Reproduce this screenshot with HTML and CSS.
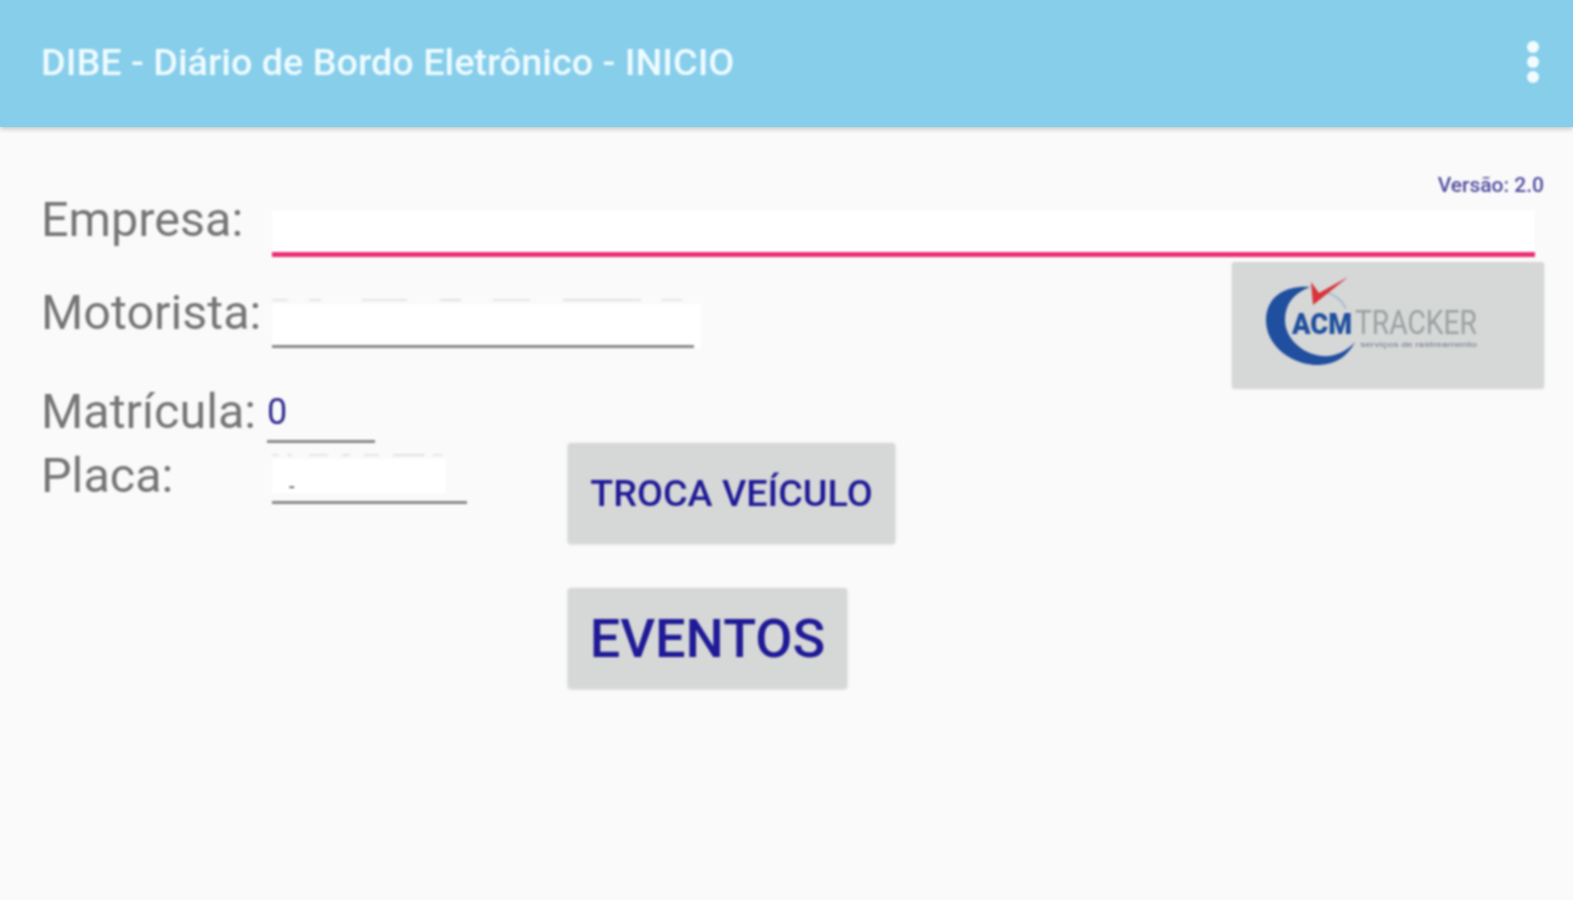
FILE: index.html
```html
<!DOCTYPE html>
<html lang="pt-BR">
<head>
<meta charset="utf-8">
<title>DIBE - Diário de Bordo Eletrônico - INICIO</title>
<link rel="stylesheet" href="styles.css">
</head>
<body>
<div class="screen">
  <header class="appbar">
    <h1 class="title">DIBE - Diário de Bordo Eletrônico - INICIO</h1>
    <div class="menu"><span class="dot"></span><span class="dot"></span><span class="dot"></span></div>
  </header>
  <main class="content">
    <div class="version">Versão: 2.0</div>
    <div class="row row-empresa">
      <div class="label">Empresa:</div>
      <div class="field field-focus"></div>
    </div>
    <div class="upper">
      <div class="upper-left">
        <div class="row row-motorista">
          <div class="label">Motorista:</div>
          <div class="field-wrap motorista">
            <div class="smudge"></div>
            <div class="field field-motorista"></div>
          </div>
        </div>
        <div class="row row-matricula">
          <div class="label">Matrícula:</div>
          <div class="field-matricula">0</div>
        </div>
      </div>
      <div class="logo">
        <svg width="312" height="126" viewBox="0 0 312 126">
          <path d="M78 25 C52 23 34 36 34 58 C34 84 60 104 88 103 C104 102 116 94 123 80 C114 90 102 95 90 94 C70 92 53 76 53 58 C53 42 62 31 78 25 Z" fill="#1f4f9e"/>
          <path d="M92 30 C102 32 110 38 114 47" fill="none" stroke="#9dbad0" stroke-width="1.5"/>
          <path d="M79 20 L81 43 L116 15 L87 31 Z" fill="#d8333a"/>
          <text class="logo-acm" x="60" y="72" textLength="60" lengthAdjust="spacingAndGlyphs">ACM</text>
          <text class="logo-tracker" x="123" y="72" textLength="122" lengthAdjust="spacingAndGlyphs">TRACKER</text>
          <text class="logo-sub" x="128" y="85" textLength="117" lengthAdjust="spacingAndGlyphs">serviços de rastreamento</text>
        </svg>
      </div>
    </div>
    <div class="lower">
      <div class="label label-placa">Placa:</div>
      <div class="field-wrap placa">
        <div class="smudge"></div>
        <div class="field field-placa"><span class="mark">-</span></div>
      </div>
      <div class="buttons">
        <button class="btn btn-small">TROCA VEÍCULO</button>
        <button class="btn btn-large">EVENTOS</button>
      </div>
    </div>
  </main>
</div>
</body>
</html>
```
FILE: styles.css
```css
html, body {
  margin: 0;
  padding: 0;
  height: 100%;
  overflow: hidden;
  background: #fafafa;
}
.screen {
  width: 1573px;
  height: 900px;
  background: #fafafa;
  font-family: Roboto, "Liberation Sans", sans-serif;
  display: flex;
  flex-direction: column;
}
.appbar {
  height: 127px;
  box-sizing: border-box;
  flex: none;
  background: #87ceeb;
  box-shadow: 0 2px 5px rgba(0, 0, 0, 0.22);
  display: flex;
  align-items: center;
  justify-content: space-between;
  padding: 0 34px 4px 41px;
}
.title {
  margin: 0;
  font-size: 37.8px;
  font-weight: 500;
  color: #eefbff;
  white-space: nowrap;
  filter: blur(1px);
}
.menu {
  display: flex;
  flex-direction: column;
  gap: 3px;
  filter: blur(1px);
}
.dot {
  width: 12px;
  height: 12px;
  border-radius: 50%;
  background: #f2fcff;
}
.content {
  padding: 46px 29px 0 41px;
  filter: blur(1px);
}
.version {
  text-align: right;
  font-size: 21px;
  font-weight: 500;
  line-height: 24px;
  color: #4f4a9e;
}
.row {
  display: flex;
}
.label {
  width: 231px;
  flex: none;
  font-size: 48.5px;
  line-height: 54px;
  color: #757575;
  white-space: nowrap;
}
.row-empresa {
  margin-top: 3px;
  height: 56px;
}
.row-empresa .label {
  margin-top: -7px;
}
.field {
  background: #fff;
  box-sizing: border-box;
  border-bottom: 3px solid #8a8a8a;
}
.field-focus {
  flex: 1;
  margin: 10px 9px 0 0;
  height: 47px;
  border-bottom: 5px solid #ec2f74;
}
.upper {
  display: flex;
  justify-content: space-between;
  margin-top: 5px;
  height: 182px;
}
.upper-left {
  display: flex;
  flex-direction: column;
}
.row-motorista {
  height: 87px;
}
.row-motorista .label {
  margin-top: 25px;
}
.field-wrap {
  display: flex;
  flex-direction: column;
}
.motorista {
  margin-top: 38px;
}
.smudge {
  height: 2px;
  margin-bottom: 3px;
  background: linear-gradient(90deg, #e8e8e8 0 4%, transparent 4% 9%, #e4e4e4 9% 12%, transparent 12% 22%, #e6e6e6 22% 33%, transparent 33% 41%, #e2e2e2 41% 46%, transparent 46% 54%, #e6e6e6 54% 63%, transparent 63% 71%, #e2e2e2 71% 90%, transparent 90% 95%, #e8e8e8 95% 100%);
}
.motorista .smudge {
  width: 410px;
}
.field-motorista {
  width: 429px;
  height: 44px;
  border-bottom: none;
  background: linear-gradient(#8a8a8a, #8a8a8a) left bottom / 422px 3px no-repeat, #fff;
}
.row-matricula {
  height: 95px;
}
.row-matricula .label {
  margin-top: 37px;
}
.field-matricula {
  margin: 33px 0 0 -5px;
  padding-top: 9px;
  width: 108px;
  height: 62px;
  box-sizing: border-box;
  border-bottom: 3px solid #8a8a8a;
  font-size: 36px;
  line-height: 44px;
  color: #2f2a8e;
}
.logo {
  width: 312px;
  height: 126px;
  margin-top: 1px;
  background: #d6d7d7;
  border-radius: 2px;
  box-shadow: 0 1px 2px rgba(0, 0, 0, 0.15);
}
.logo svg {
  display: block;
}
.logo-acm {
  font-size: 29px;
  font-weight: 900;
  fill: #1f4f9e;
}
.logo-tracker {
  font-size: 33px;
  fill: #9aa0a0;
}
.logo-sub {
  font-size: 7px;
  fill: #6f7a8c;
}
.lower {
  display: flex;
  align-items: flex-start;
}
.label-placa {
  margin-top: 6px;
}
.placa {
  width: 195px;
  margin-top: 11px;
}
.placa .smudge {
  width: 170px;
}
.field-placa {
  height: 45px;
  border-bottom-width: 3px;
  background: linear-gradient(#fff, #fff) left top / 174px 34px no-repeat;
  font-size: 20px;
  line-height: 38px;
  padding-left: 17px;
  color: #444;
}
.mark {
  display: inline-block;
  margin-top: 8px;
}
.buttons {
  margin-left: 101px;
  display: flex;
  flex-direction: column;
  align-items: flex-start;
  gap: 45px;
}
.btn {
  height: 100px;
  border: none;
  border-radius: 3px;
  background: #d6d7d7;
  box-shadow: 0 1px 3px rgba(0, 0, 0, 0.2);
  color: #1f1a96;
  font-family: inherit;
  font-weight: 500;
  padding: 0;
  white-space: nowrap;
}
.btn-small {
  width: 327px;
  font-size: 37.7px;
}
.btn-large {
  width: 279px;
  font-size: 54px;
}
```
